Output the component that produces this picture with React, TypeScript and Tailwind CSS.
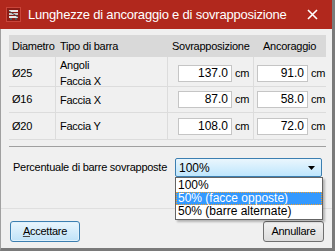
import React, { useState } from "react";

const rows = [
  { d: "Ø25", tipo: ["Angoli", "Faccia X"], sovr: "137.0", anc: "91.0", h: "h-[30px]" },
  { d: "Ø16", tipo: ["Faccia X"], sovr: "87.0", anc: "58.0", h: "h-[26px]" },
  { d: "Ø20", tipo: ["Faccia Y"], sovr: "108.0", anc: "72.0", h: "h-[27px]" },
];

const options = ["100%", "50% (facce opposte)", "50% (barre alternate)"];

const AppIcon = () => (
  <svg width="15" height="15" viewBox="0 0 15 15">
    <rect x="0" y="0" width="15" height="15" fill="#8e1d16" />
    <rect x="0.5" y="0.5" width="14" height="14" fill="none" stroke="#c9453a" />
    <rect x="3" y="3" width="9" height="2" fill="#e8e8e8" />
    <rect x="3" y="6" width="9" height="2" fill="#c8c8c8" />
    <rect x="3" y="9" width="9" height="2" fill="#e8e8e8" />
    <rect x="4" y="11" width="2" height="2" fill="#555" />
    <rect x="9" y="11" width="2" height="2" fill="#555" />
    <path d="M3 4 L12 10" stroke="#444" strokeWidth="1" />
  </svg>
);

const App = () => {
  const [selected, setSelected] = useState(1);

  return (
    <div
      className="w-[335px] h-[251px] bg-[#f0f0f0] text-[11px] tracking-[-0.25px] text-black border-l border-r-[3px] border-b-[3px] border-l-[#a0a0a0] border-r-[#7a7a7a] border-b-[#7a7a7a] flex flex-col"
      style={{ fontFamily: '"Liberation Sans", Arial, sans-serif' }}
    >
      <div className="h-[29px] bg-[#b1281d] flex items-center pl-[6px] pr-[14px] -ml-px shrink-0">
        <AppIcon />
        <span className="ml-[7px] text-white text-[13px] tracking-[-0.2px] flex-1 whitespace-nowrap overflow-hidden">
          Lunghezze di ancoraggio e di sovrapposizione
        </span>
        <svg width="11" height="11" viewBox="0 0 11 11">
          <path d="M1 1 L10 10 M10 1 L1 10" stroke="white" strokeWidth="1.6" />
        </svg>
      </div>

      <div className="px-[8px] pt-[6px] flex flex-col">
        <div className="w-[317px] h-[112px] border-b border-[#a0a0a0] flex flex-col">
          <div className="h-[22px] bg-[#d9d9d9] grid grid-cols-[47px_112px_86px_72px] items-center whitespace-nowrap">
            <span className="pl-[3px]">Diametro</span>
            <span className="pl-[4px]">Tipo di barra</span>
            <span className="pl-[4px]">Sovrapposizione</span>
            <span className="pl-[9px]">Ancoraggio</span>
          </div>
          {rows.map((r) => (
            <div
              key={r.d}
              className={`${r.h} grid grid-cols-[47px_112px_86px_72px] border-b border-[#dcdcdc]`}
            >
              <div className="pl-[3px] flex items-center border-r border-[#dcdcdc]">{r.d}</div>
              <div className="pl-[4px] flex flex-col justify-center leading-[16px] border-r border-[#dcdcdc]">
                {r.tipo.map((t) => (
                  <span key={t}>{t}</span>
                ))}
              </div>
              <div className="pl-[10px] flex items-center gap-[3px] border-r border-[#dcdcdc]">
                <div className="w-[54px] h-[17px] bg-white border border-[#c5c5c5] text-right pr-[3px] leading-[15px] text-[12px] tracking-normal">
                  {r.sovr}
                </div>
                <span>cm</span>
              </div>
              <div className="pl-[3px] flex items-center gap-[3px]">
                <div className="w-[51px] h-[17px] bg-white border border-[#c5c5c5] text-right pr-[3px] leading-[15px] text-[12px] tracking-normal">
                  {r.anc}
                </div>
                <span>cm</span>
              </div>
            </div>
          ))}
        </div>

        <div className="mt-[11px] flex items-center relative">
          <span className="pl-[4px] w-[166px] shrink-0 whitespace-nowrap">Percentuale di barre sovrapposte</span>
          <div className="w-[147px] h-[19px] border border-[#3c7fb1] rounded-[2px] bg-gradient-to-b from-[#eaf6fd] to-[#bee6fd] flex items-center pl-[3px] pr-[6px] text-[12px] tracking-normal">
            <span className="flex-1">{options[0]}</span>
            <svg width="7" height="4" viewBox="0 0 7 4">
              <path d="M0 0 L7 0 L3.5 4 Z" fill="#000" />
            </svg>
          </div>
          <div className="absolute left-[166px] top-[19px] w-[148px] bg-white border border-[#646464] shadow-[2px_2px_2px_rgba(0,0,0,0.25)] z-10 text-[12px] tracking-normal py-px">
            {options.map((o, i) => (
              <div
                key={o}
                onMouseEnter={() => setSelected(i)}
                className={`h-[13px] leading-[13px] pl-[2px] whitespace-nowrap ${
                  i === selected ? "bg-[#3399ff] text-white outline-1 outline-dotted outline-[#f0a030] -outline-offset-1" : ""
                }`}
              >
                {o}
              </div>
            ))}
          </div>
        </div>
      </div>

      <div className="mt-auto border-t border-[#dfdfdf] h-[40px] flex items-start justify-between pl-[9px] pr-[8px] pt-[12px]">
        <button className="w-[70px] h-[21px] border border-[#3c7fb1] rounded-[3px] bg-gradient-to-b from-[#eaf6fd] to-[#bfe2f8] shadow-[inset_0_0_0_1px_#dff1fc] text-[11px]">
          <span className="underline underline-offset-1 decoration-[#444]">A</span>ccettare
        </button>
        <button className="w-[61px] h-[21px] border border-[#707070] rounded-[3px] bg-gradient-to-b from-[#f2f2f2] to-[#dcdcdc] text-[11px]">
          Annullare
        </button>
      </div>
    </div>
  );
};

export default App;
